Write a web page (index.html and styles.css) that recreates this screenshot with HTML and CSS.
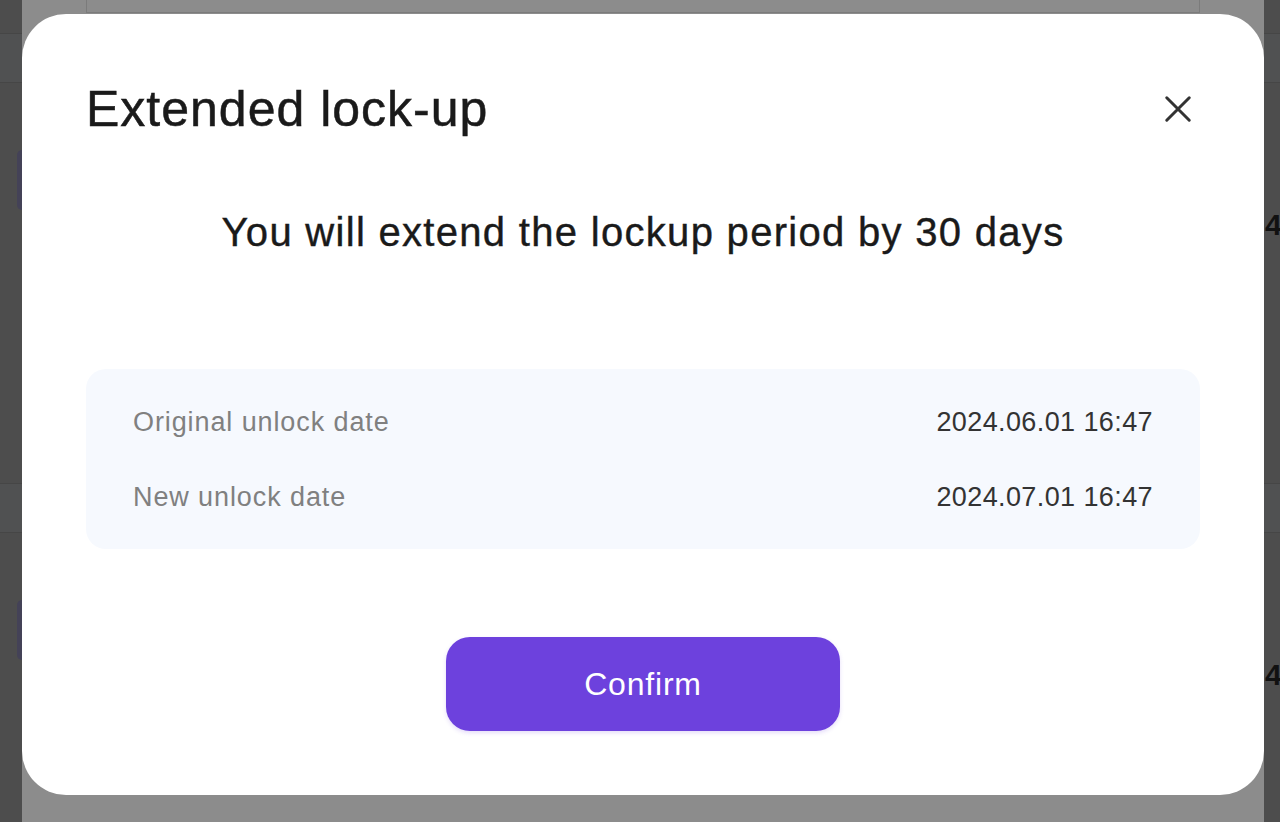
FILE: index.html
```html
<!DOCTYPE html>
<html lang="en">
<head>
<meta charset="utf-8">
<title>Extended lock-up</title>
<link rel="stylesheet" href="styles.css">
</head>
<body>
<div class="page">
  <div class="side side-left">
    <div class="gap-top"></div>
    <div class="band"></div>
    <div class="row"><div class="avatar"></div></div>
    <div class="band"></div>
    <div class="row row-last"><div class="avatar"></div></div>
  </div>
  <div class="center">
    <div class="top-box"></div>
  </div>
  <div class="side side-right">
    <div class="gap-top"></div>
    <div class="band"></div>
    <div class="row"><span class="num">4</span></div>
    <div class="band"></div>
    <div class="row row-last"><span class="num">4</span></div>
  </div>
</div>

<div class="modal">
  <div class="modal-head">
    <h1 class="modal-title">Extended lock-up</h1>
    <button class="close" aria-label="Close">
      <svg viewBox="0 0 24 24" width="30" height="30"><path d="M3 3L21 21M21 3L3 21" fill="none" stroke="#333" stroke-width="2.4" stroke-linecap="round"/></svg>
    </button>
  </div>
  <p class="modal-sub">You will extend the lockup period by 30 days</p>
  <div class="info">
    <div class="info-row"><span class="label">Original unlock date</span><span class="value">2024.06.01 16:47</span></div>
    <div class="info-row"><span class="label">New unlock date</span><span class="value">2024.07.01 16:47</span></div>
  </div>
  <div class="actions">
    <button class="confirm">Confirm</button>
  </div>
</div>
</body>
</html>
```

FILE: styles.css
```css
* { box-sizing: border-box; }
html, body { margin: 0; padding: 0; }
body {
  width: 1280px;
  height: 822px;
  overflow: hidden;
  background: #4d4d4d;
  font-family: "Liberation Sans", Arial, "Noto Sans CJK SC", sans-serif;
}

/* dimmed page beneath the dialog */
.page {
  display: grid;
  grid-template-columns: 22px 1242px 16px;
  height: 822px;
  overflow: hidden;
}
.side { background: #4d4d4d; display: flex; flex-direction: column; overflow: hidden; }
.gap-top { height: 33px; flex: none; }
.band {
  flex: none;
  height: 50px;
  background: #505152;
  border-top: 1px solid #464646;
  border-bottom: 1px solid #464646;
}
.row { flex: none; height: 400px; }
.row-last { height: 289px; }
.side-left .row { display: flex; justify-content: flex-end; padding-top: 67px; }
.avatar {
  width: 5px;
  height: 60px;
  border-radius: 6px 0 0 6px;
  background: #444257;
}
.side-right .row { padding-top: 125px; }
.num {
  display: block;
  margin-left: 1px;
  font-size: 30px;
  line-height: 34px;
  font-weight: 700;
  color: #111;
}
.center { background: #8c8c8c; }
.top-box {
  margin: 0 64px;
  height: 13px;
  border: 1px solid #7b7b7b;
  border-top: 0;
}

/* dialog */
.modal {
  position: fixed;
  top: 14px;
  left: 22px;
  width: 1242px;
  background: #fff;
  border-radius: 44px;
  padding: 65px 64px 64px;
}
.modal-head {
  display: flex;
  align-items: center;
  justify-content: space-between;
}
.modal-title {
  margin: 0;
  font-size: 50px;
  line-height: 60px;
  font-weight: 400;
  letter-spacing: 1px;
  color: #1a1a1a;
  -webkit-text-stroke: 0.5px #1a1a1a;
}
.close {
  border: 0;
  background: none;
  padding: 0;
  margin-right: 7px;
  width: 30px;
  height: 30px;
  display: flex;
}
.modal-sub {
  margin: 68px 0 0;
  text-align: center;
  font-size: 40px;
  line-height: 50px;
  letter-spacing: 1.3px;
  color: #1a1a1a;
  -webkit-text-stroke: 0.4px #1a1a1a;
}
.info {
  margin-top: 112px;
  background: #f6f9fe;
  border-radius: 20px;
  padding: 35px 47px 34px;
  display: flex;
  flex-direction: column;
  gap: 39px;
}
.info-row {
  display: flex;
  justify-content: space-between;
  align-items: center;
  line-height: 36px;
  font-size: 27px;
}
.label { color: #808080; letter-spacing: 0.9px; }
.value { color: #333; letter-spacing: 0.4px; }
.actions {
  margin-top: 88px;
  display: flex;
  justify-content: center;
}
.confirm {
  width: 394px;
  height: 94px;
  border: 0;
  border-radius: 24px;
  background: #6d41dd;
  color: #fff;
  font-family: inherit;
  font-size: 32px;
  letter-spacing: 0.8px;
  box-shadow: 0 2px 4px rgba(109, 65, 221, 0.18);
}
```
